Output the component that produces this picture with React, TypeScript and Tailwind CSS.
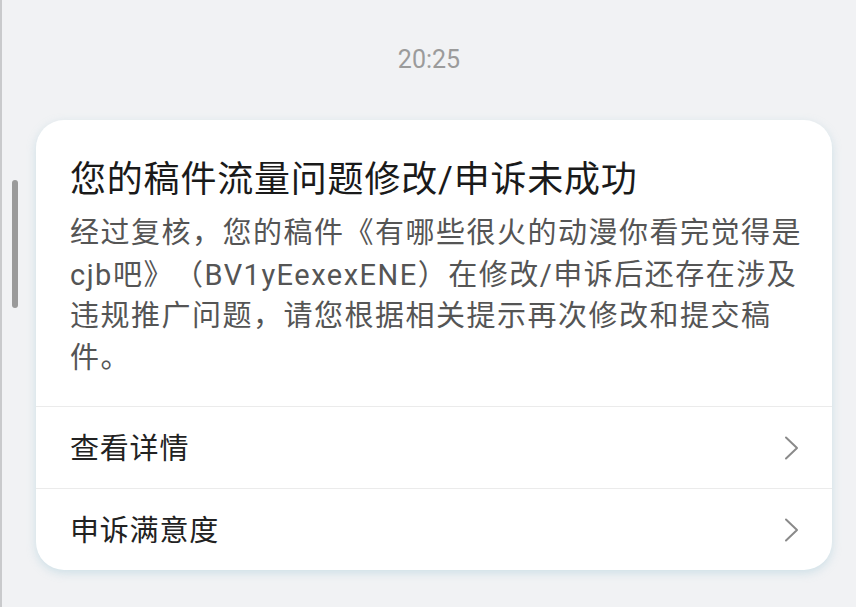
const rows = ["查看详情", "申诉满意度"];

function Chevron() {
  return (
    <svg width="16" height="24" viewBox="0 0 16 24" fill="none" className="shrink-0">
      <path d="M2 1.5 L13 12 L2 22.5" stroke="#8a8a8a" strokeWidth="2" strokeLinecap="round" strokeLinejoin="round" />
    </svg>
  );
}

export default function App() {
  return (
    <div
      className="relative h-[607px] w-[856px] overflow-hidden border-l-2 border-[#c9cacc] bg-[#f1f2f4] [text-spacing-trim:space-all]"
      style={{ fontFamily: 'Roboto, "Noto Sans CJK SC", sans-serif' }}
    >
      {/* scroll indicator */}
      <div className="absolute left-[10px] top-[180px] h-[128px] w-[6px] rounded-full bg-[#9a9a9a]" />

      <div className="pt-[42px] text-center text-[25px] leading-[36px] text-[#9b9b9b]">20:25</div>

      <div className="ml-[34px] mt-[42px] w-[796px] overflow-hidden rounded-[28px] bg-white shadow-[0_3px_10px_rgba(140,190,205,0.35)]">
        <div className="pl-[34px] pr-[26px] pb-[27px] pt-[37px]">
          <h1 className="text-[36px] font-normal leading-[46px] tracking-[0.8px] text-[#1a1a1a]">
            您的稿件流量问题修改/申诉未成功
          </h1>
          <p className="mt-[10px] text-[29px] leading-[41.5px] tracking-[1.5px] text-[#555555]">
            经过复核，您的稿件《有哪些很火的动漫你看完觉得是cjb吧》（BV1yEexexENE）在修改/申诉后还存在涉及违规推广问题，请您根据相关提示再次修改和提交稿件。
          </p>
        </div>
        {rows.map((r) => (
          <div
            key={r}
            className="flex h-[82px] items-center justify-between border-t border-[#ebebeb] pl-[34px] pr-[32px]"
          >
            <span className="pt-[5px] text-[29px] tracking-[0.8px] text-[#222222]">{r}</span>
            <Chevron />
          </div>
        ))}
      </div>
    </div>
  );
}
